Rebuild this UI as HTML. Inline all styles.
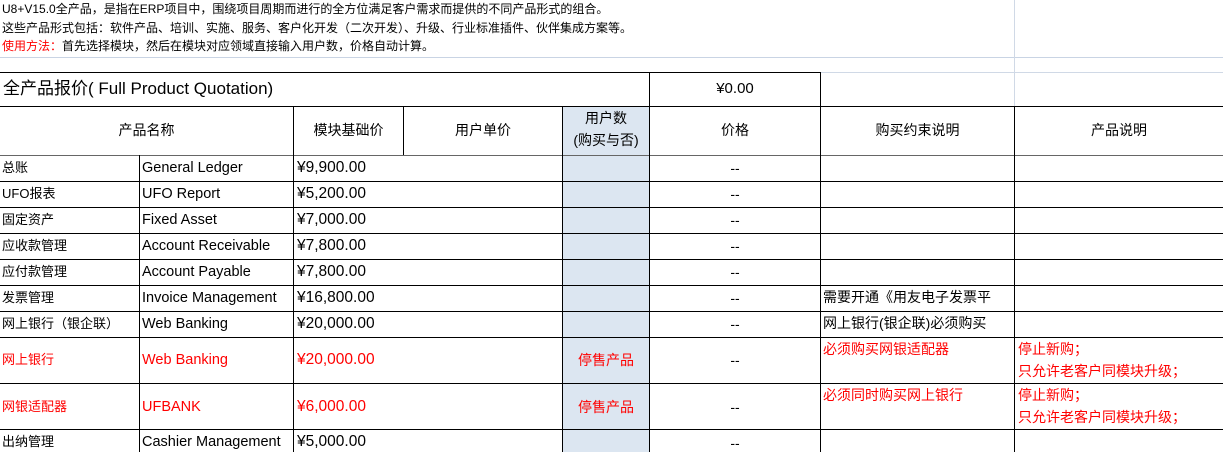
<!DOCTYPE html>
<html><head><meta charset="utf-8"><style>
body{margin:0;width:1223px;height:452px;overflow:hidden;background:#fff;position:relative;font-family:"Liberation Sans","Noto Sans CJK SC",sans-serif;color:#000}
.h{position:absolute;height:1px;background:#000}
.v{position:absolute;width:1px;background:#000}
.t{position:absolute;white-space:nowrap;font-size:14px;line-height:26px}
.e{font-size:14.5px}
.c{text-align:center}
.r{color:#f00}
.s{font-size:12px;line-height:18px;position:absolute;left:2px;white-space:nowrap}
</style></head><body>
<div class="s" style="top:0">U8+V15.0全产品，是指在ERP项目中，围绕项目周期而进行的全方位满足客户需求而提供的不同产品形式的组合。</div>
<div class="s" style="top:19px">这些产品形式包括：软件产品、培训、实施、服务、客户化开发（二次开发）、升级、行业标准插件、伙伴集成方案等。</div>
<div class="s" style="top:37px"><span style="color:#f00">使用方法：</span>首先选择模块，然后在模块对应领域直接输入用户数，价格自动计算。</div>
<div class="h" style="top:57px;left:0;width:1223px;background:#c9d4e4"></div>
<div class="h" style="top:72px;left:820px;width:403px;background:#d0d9e6"></div>
<div class="v" style="left:1014px;top:0;height:106px;background:#d0d9e6"></div>
<div style="position:absolute;left:562px;top:106px;width:87px;height:346px;background:#dce6f1"></div>
<div class="h" style="top:72px;left:0;width:821px"></div>
<div class="h" style="top:106px;left:0;width:1223px"></div>
<div class="h" style="top:155px;left:0;width:1223px;background:#666"></div>
<div class="h" style="top:181px;left:0;width:1223px"></div>
<div class="h" style="top:207px;left:0;width:1223px"></div>
<div class="h" style="top:233px;left:0;width:1223px"></div>
<div class="h" style="top:259px;left:0;width:1223px"></div>
<div class="h" style="top:285px;left:0;width:1223px"></div>
<div class="h" style="top:311px;left:0;width:1223px"></div>
<div class="h" style="top:337px;left:0;width:1223px"></div>
<div class="h" style="top:383px;left:0;width:1223px"></div>
<div class="h" style="top:429px;left:0;width:1223px"></div>
<div class="v" style="left:649px;top:72px;height:380px"></div>
<div class="v" style="left:820px;top:72px;height:380px"></div>
<div class="v" style="left:1014px;top:106px;height:346px"></div>
<div class="v" style="left:562px;top:106px;height:346px"></div>
<div class="v" style="left:293px;top:106px;height:346px"></div>
<div class="v" style="left:403px;top:106px;height:49px"></div>
<div class="v" style="left:139px;top:155px;height:297px"></div>
<div class="t" style="left:3px;top:76px;font-size:17px">全产品报价( Full Product Quotation)</div>
<div class="t c" style="left:650px;top:76px;width:170px;font-size:15px">¥0.00</div>
<div class="t c" style="left:0;top:117px;width:293px">产品名称</div>
<div class="t c" style="left:294px;top:117px;width:109px">模块基础价</div>
<div class="t c" style="left:404px;top:117px;width:158px">用户单价</div>
<div class="t c" style="left:563px;top:107px;width:86px;line-height:22px">用户数<br>(购买与否)</div>
<div class="t c" style="left:650px;top:117px;width:170px">价格</div>
<div class="t c" style="left:821px;top:117px;width:193px">购买约束说明</div>
<div class="t c" style="left:1015px;top:117px;width:208px">产品说明</div>

<div class="t" style="left:2px;top:155px;font-size:13px">总账</div><div class="t e" style="left:142px;top:155px">General Ledger</div><div class="t" style="left:297px;top:155px;font-size:15.5px">¥9,900.00</div><div class="t c" style="left:650px;top:155px;width:170px">--</div>
<div class="t" style="left:2px;top:181px;font-size:13px">UFO报表</div><div class="t e" style="left:142px;top:181px">UFO Report</div><div class="t" style="left:297px;top:181px;font-size:15.5px">¥5,200.00</div><div class="t c" style="left:650px;top:181px;width:170px">--</div>
<div class="t" style="left:2px;top:207px;font-size:13px">固定资产</div><div class="t e" style="left:142px;top:207px">Fixed Asset</div><div class="t" style="left:297px;top:207px;font-size:15.5px">¥7,000.00</div><div class="t c" style="left:650px;top:207px;width:170px">--</div>
<div class="t" style="left:2px;top:233px;font-size:13px">应收款管理</div><div class="t e" style="left:142px;top:233px">Account Receivable</div><div class="t" style="left:297px;top:233px;font-size:15.5px">¥7,800.00</div><div class="t c" style="left:650px;top:233px;width:170px">--</div>
<div class="t" style="left:2px;top:259px;font-size:13px">应付款管理</div><div class="t e" style="left:142px;top:259px">Account Payable</div><div class="t" style="left:297px;top:259px;font-size:15.5px">¥7,800.00</div><div class="t c" style="left:650px;top:259px;width:170px">--</div>
<div class="t" style="left:2px;top:285px;font-size:13px">发票管理</div><div class="t e" style="left:142px;top:285px">Invoice Management</div><div class="t" style="left:297px;top:285px;font-size:15.5px">¥16,800.00</div><div class="t c" style="left:650px;top:285px;width:170px">--</div><div class="t" style="left:823px;top:284px">需要开通《用友电子发票平</div>
<div class="t" style="left:2px;top:311px;font-size:13px">网上银行（银企联）</div><div class="t e" style="left:142px;top:311px">Web Banking</div><div class="t" style="left:297px;top:311px;font-size:15.5px">¥20,000.00</div><div class="t c" style="left:650px;top:311px;width:170px">--</div><div class="t" style="left:823px;top:310px">网上银行(银企联)必须购买</div>

<div class="t r" style="left:2px;top:347px;font-size:13px">网上银行</div><div class="t r e" style="left:142px;top:347px">Web Banking</div><div class="t r" style="left:297px;top:347px;font-size:15.5px">¥20,000.00</div><div class="t c r" style="left:563px;top:347px;width:86px">停售产品</div><div class="t c" style="left:650px;top:347px;width:170px">--</div><div class="t r" style="left:823px;top:336px">必须购买网银适配器</div><div class="t r" style="left:1018px;top:338px;line-height:22px">停止新购；<br>只允许老客户同模块升级；</div>

<div class="t r" style="left:2px;top:394px;font-size:13px">网银适配器</div><div class="t r e" style="left:142px;top:394px">UFBANK</div><div class="t r" style="left:297px;top:394px;font-size:15.5px">¥6,000.00</div><div class="t c r" style="left:563px;top:394px;width:86px">停售产品</div><div class="t c" style="left:650px;top:394px;width:170px">--</div><div class="t r" style="left:823px;top:382px">必须同时购买网上银行</div><div class="t r" style="left:1018px;top:384px;line-height:22px">停止新购；<br>只允许老客户同模块升级；</div>

<div class="t" style="left:2px;top:429px;font-size:13px">出纳管理</div><div class="t e" style="left:142px;top:429px">Cashier Management</div><div class="t" style="left:297px;top:429px;font-size:15.5px">¥5,000.00</div><div class="t c" style="left:650px;top:430px;width:170px">--</div>
</body></html>
